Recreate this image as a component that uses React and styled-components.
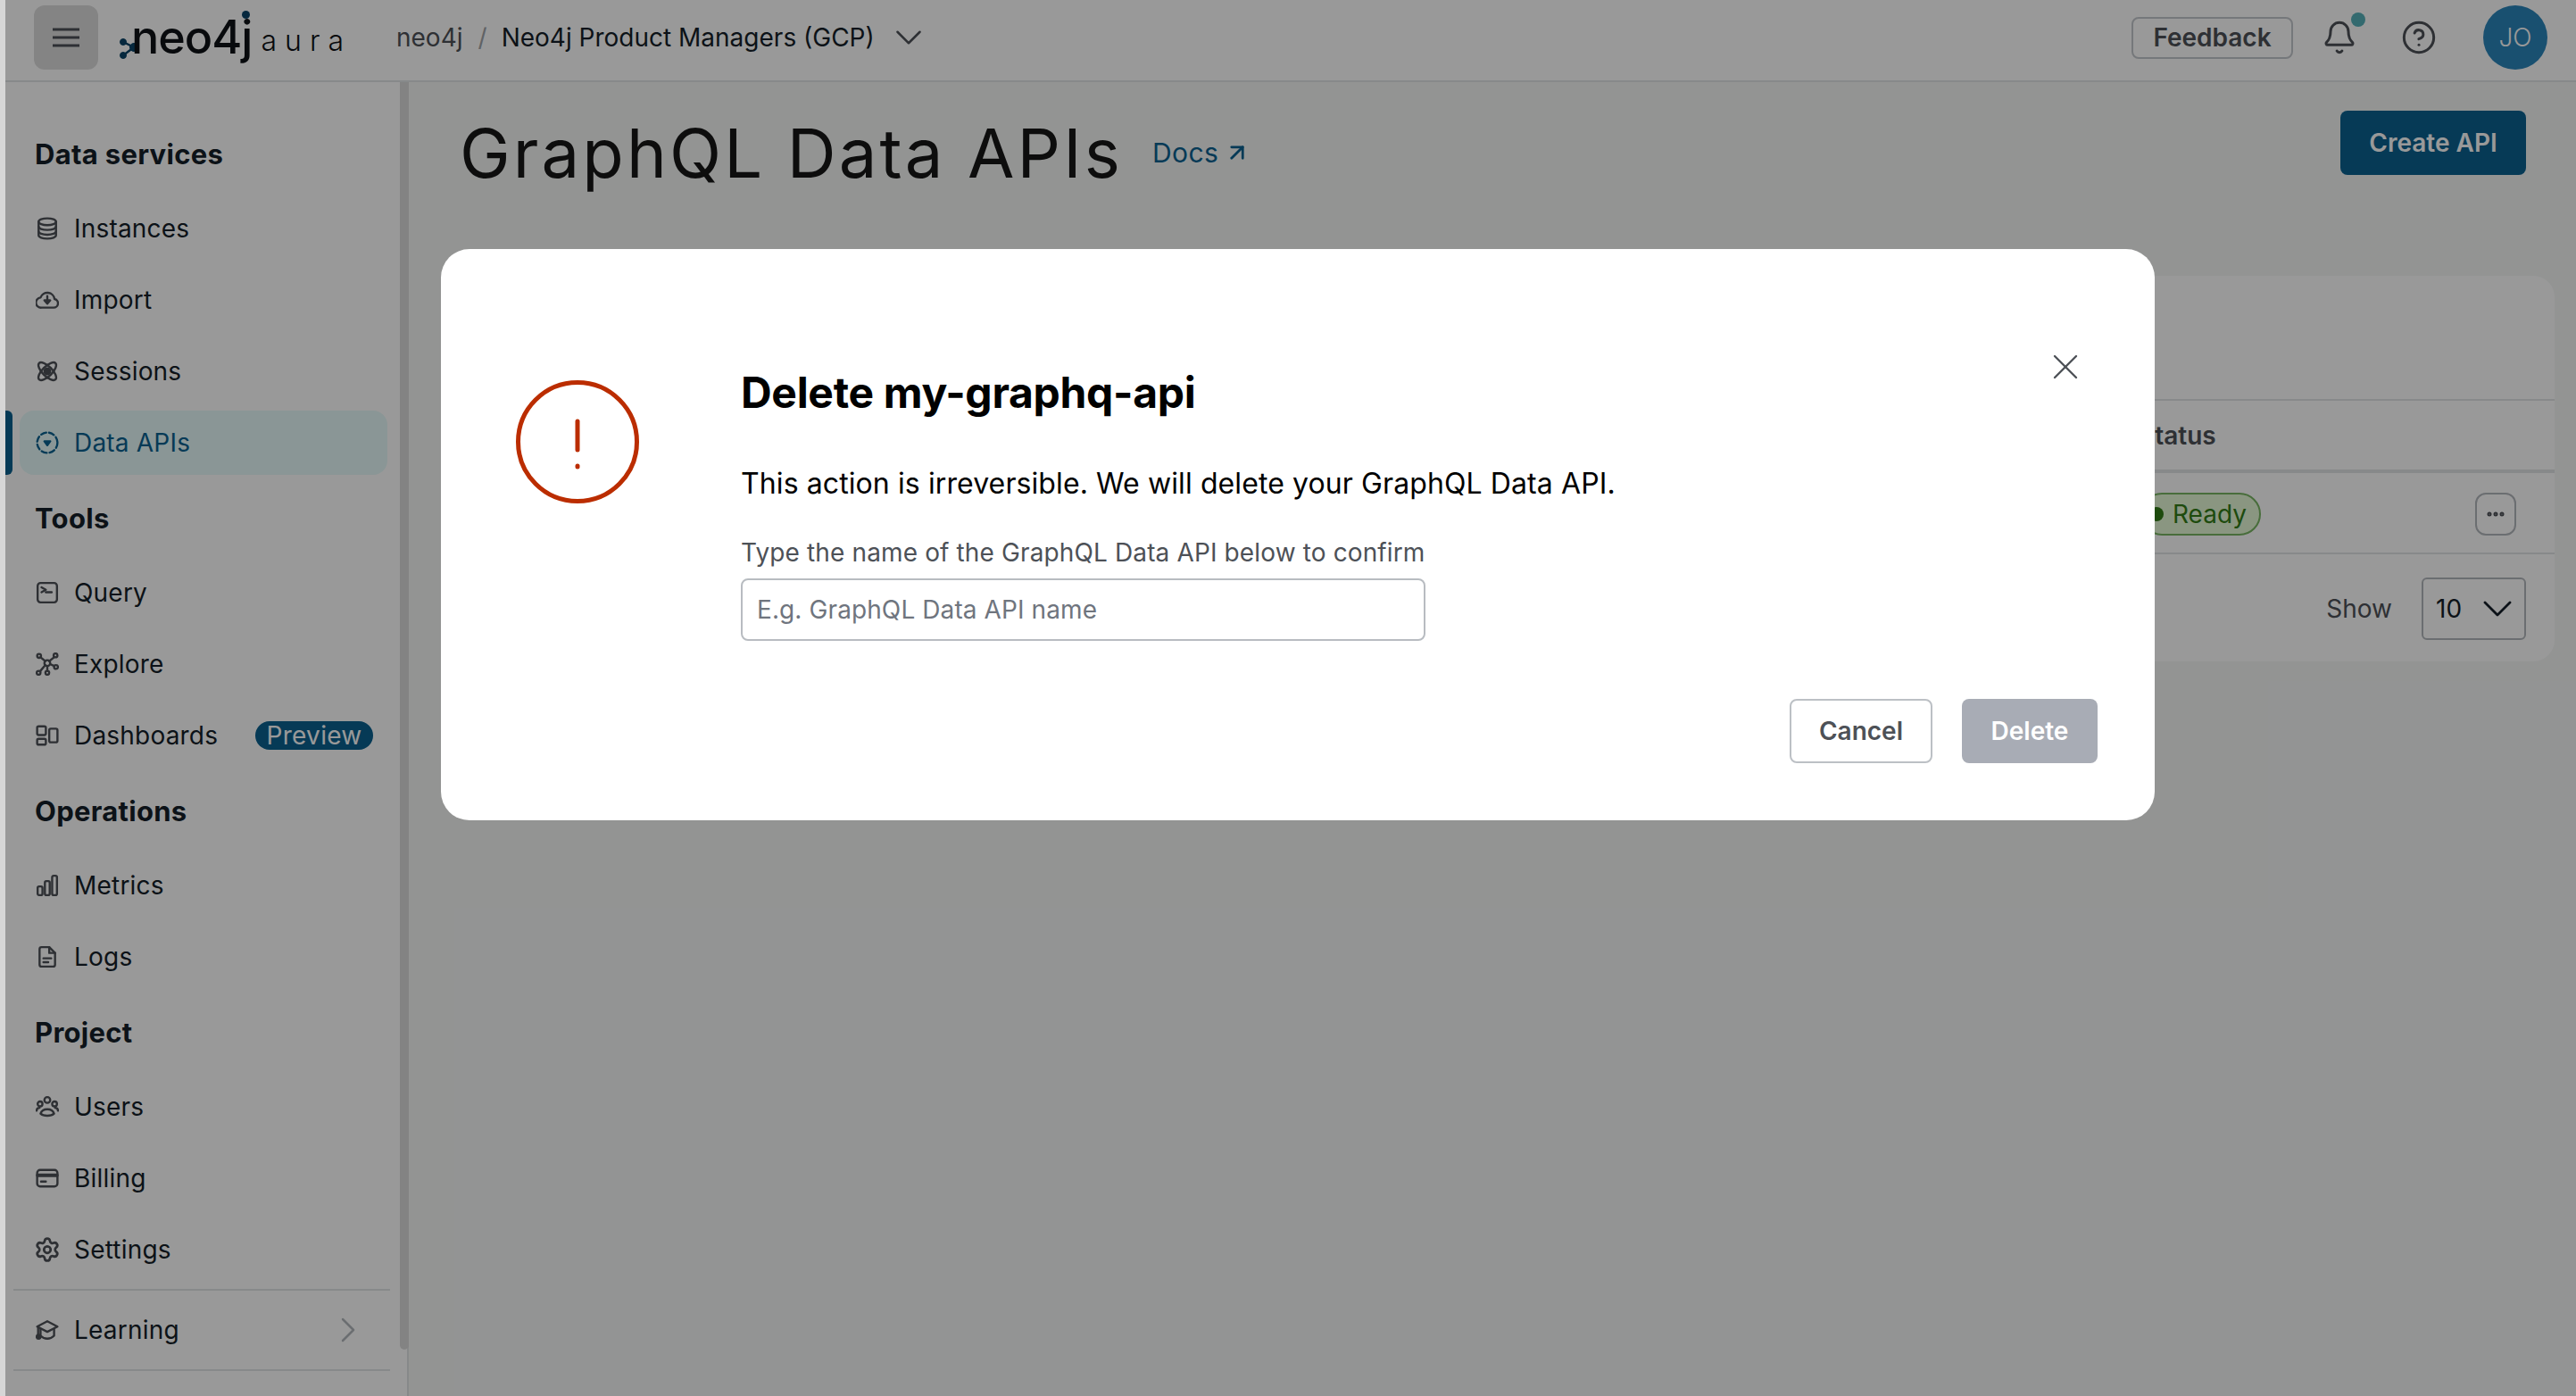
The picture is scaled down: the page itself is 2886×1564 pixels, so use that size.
import React from "react";
import styled, { createGlobalStyle } from "styled-components";
import {
  Settings,
  ChevronDown,
  ChevronRight,
  Bell,
  CircleHelp,
  X,
  ArrowUpRight,
  Ellipsis,
} from "lucide-react";

const INK = "#151e29";
const WEAK = "#4d5157";
const PRIMARY = "#0a6190";
const RULE = "#e2e4e6";

const GlobalStyle = createGlobalStyle`
  html, body {
    margin: 0;
    height: 100%;
    overflow: hidden;
    background: #fff;
  }
  body {
    font-family: Inter, "Liberation Sans", sans-serif;
    color: ${INK};
  }
  * { box-sizing: border-box; }
`;

const Frame = styled.div`
  display: flex;
  width: 2886px;
  height: 1564px;
`;

const WindowEdge = styled.div`
  width: 6px;
  flex: none;
  background: #d6d6d6;
`;

const Screen = styled.div`
  position: relative;
  flex: 1;
  display: flex;
  flex-direction: column;
  min-width: 0;
`;

const Topbar = styled.header`
  display: flex;
  align-items: center;
  height: 92px;
  flex: none;
  padding: 0 32px 6px;
  background: #fff;
  border-bottom: 2px solid ${RULE};
`;

const MenuButton = styled.div`
  display: flex;
  align-items: center;
  justify-content: center;
  width: 72px;
  height: 72px;
  border-radius: 12px;
  background: #dcdcdc;
  color: ${WEAK};
`;

const Logo = styled.div`
  position: relative;
  display: flex;
  align-items: center;
  margin-left: 23px;
  width: 311px;
`;

const LogoWord = styled.span`
  font-size: 52px;
  font-weight: 500;
  letter-spacing: -1px;
  line-height: 60px;
  margin-left: -8px;
  color: #0e1216;
`;

const LogoJot = styled.span`
  position: absolute;
  left: 138px;
  top: 0;
  width: 9px;
  height: 9px;
  border-radius: 50%;
  background: #0a4468;
`;

const LogoProduct = styled.span`
  font-size: 32px;
  font-weight: 300;
  letter-spacing: 9px;
  margin-left: 10px;
  margin-top: 6px;
  color: #0e1216;
`;

const Crumbs = styled.nav`
  display: flex;
  align-items: center;
  font-size: 28px;
`;

const CrumbRoot = styled.span`
  color: ${WEAK};
`;

const CrumbSlash = styled.span`
  margin: 0 16px 0 17px;
  color: #a0a4a8;
`;

const CrumbChevron = styled(ChevronDown)`
  margin-left: 13px;
  color: ${WEAK};
`;

const TopActions = styled.div`
  display: flex;
  align-items: center;
  margin-left: auto;
`;

const FeedbackButton = styled.div`
  display: flex;
  align-items: center;
  justify-content: center;
  width: 181px;
  height: 47px;
  border: 2px solid #c4c8cd;
  border-radius: 8px;
  font-size: 28px;
  font-weight: 600;
  color: ${WEAK};
`;

const BellWrap = styled.div`
  position: relative;
  display: flex;
  margin-left: 32px;
  color: ${WEAK};
`;

const BellDot = styled.span`
  position: absolute;
  top: -8px;
  right: -9px;
  width: 16px;
  height: 16px;
  border-radius: 50%;
  background: #55b1b9;
`;

const HelpIcon = styled(CircleHelp)`
  margin-left: 49px;
  color: ${WEAK};
`;

const Avatar = styled.div`
  display: flex;
  align-items: center;
  justify-content: center;
  width: 72px;
  height: 72px;
  margin-left: 52px;
  border-radius: 50%;
  background: #2b85bb;
  color: #fff;
  font-size: 28px;
  font-weight: 300;
`;

const Body = styled.div`
  flex: 1;
  display: flex;
  min-height: 0;
`;

const Sidebar = styled.aside`
  position: relative;
  width: 452px;
  flex: none;
  padding-top: 36px;
  background: #fff;
  border-right: 2px solid ${RULE};
`;

const Scrollbar = styled.div`
  position: absolute;
  top: 0;
  right: -2px;
  width: 10px;
  height: 1420px;
  border-radius: 0 0 5px 5px;
  background: #dadada;
`;

const NavHeading = styled.div`
  display: flex;
  align-items: center;
  height: 88px;
  padding-left: 33px;
  font-size: 31px;
  font-weight: 700;
  letter-spacing: 0.3px;
`;

const NavRow = styled.div`
  position: relative;
  display: flex;
  align-items: center;
  height: ${(p) => (p.$active ? "72px" : "80px")};
  margin: ${(p) => (p.$active ? "4px 22px 4px 16px" : "0")};
  padding-left: ${(p) => (p.$active ? "18px" : "34px")};
  border-radius: ${(p) => (p.$active ? "16px" : "0")};
  background: ${(p) => (p.$active ? "#e6fbfa" : "transparent")};
  color: ${(p) => (p.$active ? PRIMARY : INK)};
  font-size: 28px;
  letter-spacing: 0.2px;

  svg.nav-icon {
    flex: none;
    color: ${(p) => (p.$active ? PRIMARY : WEAK)};
  }
`;

const ActiveBar = styled.span`
  position: absolute;
  left: -16px;
  top: 0;
  bottom: 0;
  width: 8px;
  border-radius: 0 6px 6px 0;
  background: ${PRIMARY};
`;

const NavLabel = styled.span`
  margin-left: 17px;
`;

const PreviewTag = styled.span`
  display: flex;
  align-items: center;
  justify-content: center;
  width: 132px;
  height: 32px;
  margin-left: auto;
  margin-right: 38px;
  border-radius: 16px;
  background: ${PRIMARY};
  color: #fff;
  font-size: 28px;
  letter-spacing: 0.3px;
`;

const NavRule = styled.div`
  height: 2px;
  margin: 4px 19px 4px 9px;
  background: ${RULE};
`;

const LearnChevron = styled(ChevronRight)`
  margin-left: auto;
  margin-right: 42px;
  color: #b3b7bc;
`;

const SettingsGlyph = styled(Settings)`
  margin: -2px;
`;

const Main = styled.main`
  flex: 1;
  min-width: 0;
  background: #f5f7f6;
`;

const PageHeader = styled.div`
  display: flex;
  align-items: flex-start;
  justify-content: space-between;
  height: 217px;
  padding: 32px 56px 0 57px;
`;

const TitleRow = styled.div`
  display: flex;
  align-items: center;
  height: 94px;
`;

const PageTitle = styled.h1`
  margin: 0;
  font-size: 76px;
  font-weight: 400;
  letter-spacing: 3.1px;
  color: #171717;
`;

const DocsLink = styled.span`
  display: flex;
  align-items: center;
  gap: 6px;
  margin-left: 33px;
  color: ${PRIMARY};
  font-size: 30px;
  letter-spacing: 0.4px;
`;

const PrimaryButton = styled.div`
  display: flex;
  align-items: center;
  justify-content: center;
  width: 208px;
  height: 72px;
  border-radius: 8px;
  background: ${PRIMARY};
  color: #fff;
  font-size: 28px;
  font-weight: 600;
`;

const Card = styled.section`
  margin: 0 24px 0 56px;
  height: 432px;
  border-radius: 24px;
  background: #fff;
  padding-top: 138px;
`;

const TableHead = styled.div`
  display: flex;
  align-items: center;
  justify-content: flex-end;
  height: 83px;
  border-top: 2px solid ${RULE};
  border-bottom: 4px solid ${RULE};
`;

const StatusHead = styled.div`
  width: 466px;
  font-size: 28px;
  font-weight: 600;
  color: ${WEAK};
`;

const TableRow = styled.div`
  display: flex;
  align-items: center;
  justify-content: flex-end;
  height: 91px;
  padding: 3px 43px 0 0;
  border-bottom: 2px solid ${RULE};
`;

const StatusCell = styled.div`
  flex: none;
  width: 375px;
`;

const ReadyPill = styled.div`
  display: flex;
  align-items: center;
  height: 48px;
  width: 135px;
  padding-left: 8px;
  border: 2px solid #78b663;
  border-radius: 24px;
  background: #e7fad8;
  color: #327d17;
  font-size: 28px;
`;

const ReadyDot = styled.span`
  width: 16px;
  height: 16px;
  margin-right: 10px;
  border-radius: 50%;
  background: #327d17;
`;

const RowMenu = styled.div`
  display: flex;
  align-items: center;
  justify-content: center;
  width: 46px;
  height: 48px;
  border: 2px solid #b3b7bc;
  border-radius: 12px;
  color: ${WEAK};
`;

const TableFooter = styled.div`
  display: flex;
  align-items: center;
  justify-content: flex-end;
  height: 120px;
  padding: 2px 32px 0 0;
`;

const ShowLabel = styled.span`
  margin-right: 33px;
  color: ${WEAK};
  font-size: 28px;
`;

const PageSize = styled.div`
  display: flex;
  align-items: center;
  justify-content: space-between;
  width: 117px;
  height: 70px;
  padding: 0 14px;
  border: 2px solid #b3b7bc;
  border-radius: 6px;
  font-size: 28px;
`;

const PageSizeChevron = styled(ChevronDown)`
  margin: -12px;
  flex: none;
`;

const Backdrop = styled.div`
  position: absolute;
  inset: 0;
  padding: 279px 0 0 488px;
  background: rgba(0, 0, 0, 0.4);
`;

const Modal = styled.div`
  position: relative;
  display: flex;
  width: 1920px;
  height: 640px;
  padding: 147px 64px 0 84px;
  border-radius: 32px;
  background: #fff;
`;

const ModalClose = styled(X)`
  position: absolute;
  top: 108px;
  right: 76px;
  color: ${WEAK};
`;

const ModalContent = styled.div`
  flex: 1;
  margin-left: 114px;
  margin-top: -14px;
`;

const ModalTitle = styled.h2`
  margin: 0;
  font-size: 48px;
  line-height: 56px;
  font-weight: 700;
  letter-spacing: -0.3px;
  color: #000;
`;

const ModalText = styled.p`
  margin: 54px 0 0;
  font-size: 32px;
  line-height: 40px;
  letter-spacing: 0.1px;
  color: #000;
`;

const FieldLabel = styled.label`
  display: block;
  margin-top: 39px;
  font-size: 28px;
  line-height: 36px;
  letter-spacing: 0.13px;
  color: ${WEAK};
`;

const NameInput = styled.input`
  display: block;
  width: 767px;
  height: 70px;
  margin-top: 11px;
  padding: 0 16px;
  border: 2px solid #b8bcc1;
  border-radius: 8px;
  font: inherit;
  font-size: 28px;
  letter-spacing: 0.1px;
  outline: none;

  &::placeholder {
    color: #6f757e;
    opacity: 1;
  }
`;

const ModalActions = styled.div`
  display: flex;
  justify-content: flex-end;
  gap: 33px;
  margin-top: 65px;
`;

const ModalButton = styled.div`
  display: flex;
  align-items: center;
  justify-content: center;
  width: ${(p) => (p.$disabled ? "152px" : "160px")};
  height: 72px;
  border: ${(p) => (p.$disabled ? "none" : "2px solid #bcc0c5")};
  border-radius: 8px;
  background: ${(p) => (p.$disabled ? "#a8acb5" : "#fff")};
  color: ${(p) => (p.$disabled ? "#fff" : WEAK)};
  font-size: 28px;
  font-weight: 600;
`;

const SvgIcon = ({ children }) => (
  <svg
    className="nav-icon"
    width="26"
    height="26"
    viewBox="0 0 24 24"
    fill="none"
    stroke="currentColor"
    strokeWidth="2.2"
    strokeLinecap="round"
    strokeLinejoin="round"
  >
    {children}
  </svg>
);

const InstancesIcon = () => (
  <SvgIcon>
    <ellipse cx="12" cy="5" rx="9" ry="3.5" />
    <path d="M3 5v14c0 2 4 3.5 9 3.5s9-1.5 9-3.5V5" />
    <path d="M3 10c0 2 4 3.5 9 3.5s9-1.5 9-3.5" />
    <path d="M3 15c0 2 4 3.5 9 3.5s9-1.5 9-3.5" />
  </SvgIcon>
);

const ImportIcon = () => (
  <SvgIcon>
    <path d="M6 20h12.5a4.5 4.5 0 0 0 1-8.9A7.5 7.5 0 0 0 5 9.6 5.2 5.2 0 0 0 6 20z" />
    <path d="M12 8v7" />
    <path d="M9 12.5l3 3.5 3-3.5z" fill="currentColor" />
  </SvgIcon>
);

const SessionsIcon = () => (
  <SvgIcon>
    <ellipse cx="12" cy="12" rx="5" ry="12" transform="rotate(45 12 12)" />
    <ellipse cx="12" cy="12" rx="5" ry="12" transform="rotate(-45 12 12)" />
    <circle cx="12" cy="12" r="3" fill="currentColor" />
  </SvgIcon>
);

const DataApiIcon = () => (
  <SvgIcon>
    <circle cx="12" cy="12" r="10.5" strokeDasharray="5.5 3" />
    <path d="M9 10.5h6l-3 4z" fill="currentColor" />
  </SvgIcon>
);

const QueryIcon = () => (
  <SvgIcon>
    <rect x="2" y="2" width="20" height="20" rx="3" />
    <path d="M6 6.5l4.5 2.5L6 11.5" />
    <path d="M10.5 11.5h6" />
  </SvgIcon>
);

const ExploreIcon = () => (
  <SvgIcon>
    <circle cx="12" cy="11" r="3" />
    <circle cx="3.5" cy="3.5" r="2" />
    <circle cx="20.5" cy="3" r="2" />
    <circle cx="3" cy="21" r="2" />
    <circle cx="12" cy="21" r="2" />
    <circle cx="21" cy="15" r="2" />
    <path d="M5 5l5 4M19 5l-5 4M4.5 19.5l5.5-6.5M12 14v5M15 12l4 2" />
  </SvgIcon>
);

const DashboardIcon = () => (
  <SvgIcon>
    <rect x="1.5" y="2.5" width="9" height="9" rx="1.5" />
    <rect x="1.5" y="15.5" width="9" height="6" rx="1.5" />
    <rect x="14" y="5" width="8.5" height="14" rx="1.5" />
  </SvgIcon>
);

const MetricsIcon = () => (
  <SvgIcon>
    <rect x="2" y="13" width="5" height="9" rx="1.5" />
    <rect x="9.5" y="7.5" width="5" height="14.5" rx="1.5" />
    <rect x="17" y="2" width="5" height="20" rx="1.5" />
  </SvgIcon>
);

const LogsIcon = () => (
  <SvgIcon>
    <path d="M6 2h8l6 6v12a2 2 0 0 1-2 2H6a2 2 0 0 1-2-2V4a2 2 0 0 1 2-2z" />
    <path d="M14 2v6h6" />
    <path d="M8 13.5h8M8 17.5h5" />
  </SvgIcon>
);

const UsersIcon = () => (
  <SvgIcon>
    <circle cx="12" cy="5" r="3" />
    <circle cx="4.5" cy="9" r="2.5" />
    <circle cx="19.5" cy="9" r="2.5" />
    <path d="M5 19c2-6 12-6 14 0-3 3-11 3-14 0z" />
    <path d="M1 16c0-2 1-3 3-3M23 16c0-2-1-3-3-3" />
  </SvgIcon>
);

const BillingIcon = () => (
  <SvgIcon>
    <rect x="1.5" y="3.5" width="21" height="17" rx="3" />
    <path d="M2 9h20" strokeWidth="3.5" />
    <path d="M5.5 15.5h5" />
  </SvgIcon>
);

const LearningIcon = () => (
  <SvgIcon>
    <path d="M12 3L1.5 8.5 12 14l10.5-5.5z" />
    <path d="M5 11v7c4 4 10 4 14 0v-7" />
    <path d="M2.5 10v8" />
    <circle cx="3" cy="19" r="2" fill="currentColor" />
  </SvgIcon>
);

const sections = [
  {
    title: "Data services",
    items: [
      { label: "Instances", glyph: <InstancesIcon /> },
      { label: "Import", glyph: <ImportIcon /> },
      { label: "Sessions", glyph: <SessionsIcon /> },
      { label: "Data APIs", glyph: <DataApiIcon />, active: true },
    ],
  },
  {
    title: "Tools",
    items: [
      { label: "Query", glyph: <QueryIcon /> },
      { label: "Explore", glyph: <ExploreIcon /> },
      { label: "Dashboards", glyph: <DashboardIcon />, tag: "Preview" },
    ],
  },
  {
    title: "Operations",
    items: [
      { label: "Metrics", glyph: <MetricsIcon /> },
      { label: "Logs", glyph: <LogsIcon /> },
    ],
  },
  {
    title: "Project",
    items: [
      { label: "Users", glyph: <UsersIcon /> },
      { label: "Billing", glyph: <BillingIcon /> },
      {
        label: "Settings",
        glyph: <SettingsGlyph className="nav-icon" size={30} strokeWidth={2.2} />,
      },
    ],
  },
];

const LogoMark = () => (
  <svg width="22" height="48" viewBox="0 0 22 48">
    <g fill="#0a4468" stroke="#0a4468">
      <path d="M5 29l12 6-12 9" fill="none" strokeWidth="2.5" />
      <circle cx="5" cy="29" r="3.5" />
      <circle cx="17" cy="35" r="4.5" />
      <circle cx="5" cy="44" r="3.5" />
    </g>
  </svg>
);

const App = () => (
  <Frame>
    <GlobalStyle />
    <WindowEdge />
    <Screen>
      <Topbar>
        <MenuButton>
          <svg width="32" height="24" viewBox="0 0 32 24" stroke="currentColor" strokeWidth="3">
            <path d="M1 3h30M1 12h30M1 21h30" />
          </svg>
        </MenuButton>
        <Logo>
          <LogoMark />
          <LogoWord>neo4j</LogoWord>
          <LogoProduct>aura</LogoProduct>
          <LogoJot />
        </Logo>
        <Crumbs>
          <CrumbRoot>neo4j</CrumbRoot>
          <CrumbSlash>/</CrumbSlash>
          <span>Neo4j Product Managers (GCP)</span>
          <CrumbChevron size={50} strokeWidth={1.2} />
        </Crumbs>
        <TopActions>
          <FeedbackButton>Feedback</FeedbackButton>
          <BellWrap>
            <Bell size={40} strokeWidth={1.8} />
            <BellDot />
          </BellWrap>
          <HelpIcon size={40} strokeWidth={1.8} />
          <Avatar>JO</Avatar>
        </TopActions>
      </Topbar>
      <Body>
        <Sidebar>
          {sections.map((section) => (
            <div key={section.title}>
              <NavHeading>{section.title}</NavHeading>
              {section.items.map((item) => (
                <NavRow key={item.label} $active={item.active}>
                  {item.active && <ActiveBar />}
                  {item.glyph}
                  <NavLabel>{item.label}</NavLabel>
                  {item.tag && <PreviewTag>{item.tag}</PreviewTag>}
                </NavRow>
              ))}
            </div>
          ))}
          <NavRule />
          <NavRow>
            <LearningIcon />
            <NavLabel>Learning</NavLabel>
            <LearnChevron size={48} strokeWidth={1.25} />
          </NavRow>
          <NavRule />
          <Scrollbar />
        </Sidebar>
        <Main>
          <PageHeader>
            <TitleRow>
              <PageTitle>GraphQL Data APIs</PageTitle>
              <DocsLink>
                Docs
                <ArrowUpRight size={30} strokeWidth={2.2} />
              </DocsLink>
            </TitleRow>
            <PrimaryButton>Create API</PrimaryButton>
          </PageHeader>
          <Card>
            <TableHead>
              <StatusHead>Status</StatusHead>
            </TableHead>
            <TableRow>
              <StatusCell>
                <ReadyPill>
                  <ReadyDot />
                  Ready
                </ReadyPill>
              </StatusCell>
              <RowMenu>
                <Ellipsis size={24} strokeWidth={3} />
              </RowMenu>
            </TableRow>
            <TableFooter>
              <ShowLabel>Show</ShowLabel>
              <PageSize>
                10
                <PageSizeChevron size={56} strokeWidth={1.2} />
              </PageSize>
            </TableFooter>
          </Card>
        </Main>
      </Body>
      <Backdrop>
        <Modal>
          <svg width="138" height="138" viewBox="0 0 138 138" fill="none" stroke="#bb2d00" strokeLinecap="round">
            <circle cx="69" cy="69" r="66.5" strokeWidth="5" />
            <path d="M69 46v32" strokeWidth="5" />
            <path d="M69 96v1" strokeWidth="5" />
          </svg>
          <ModalContent>
            <ModalTitle>Delete my-graphq-api</ModalTitle>
            <ModalText>This action is irreversible. We will delete your GraphQL Data API.</ModalText>
            <FieldLabel>Type the name of the GraphQL Data API below to confirm</FieldLabel>
            <NameInput placeholder="E.g. GraphQL Data API name" />
            <ModalActions>
              <ModalButton>Cancel</ModalButton>
              <ModalButton $disabled>Delete</ModalButton>
            </ModalActions>
          </ModalContent>
          <ModalClose size={48} strokeWidth={1.2} />
        </Modal>
      </Backdrop>
    </Screen>
  </Frame>
);

export default App;
